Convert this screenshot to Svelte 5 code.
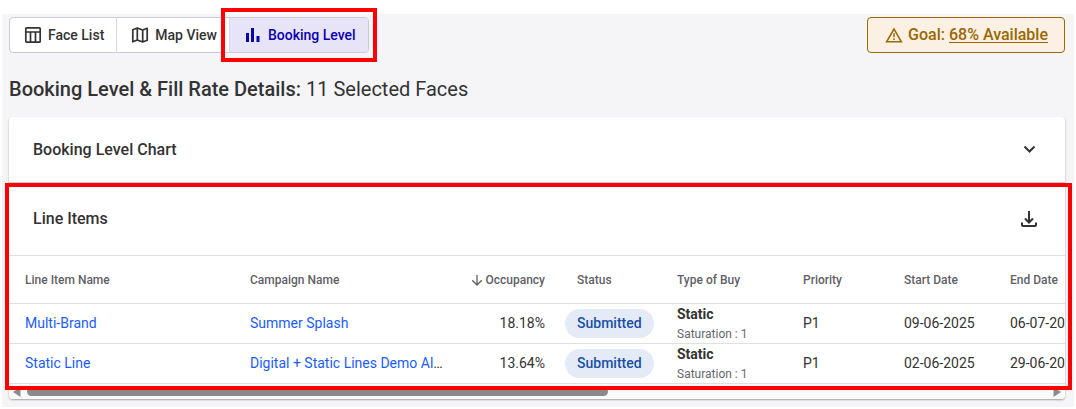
<script lang="ts">
	type LineItem = {
		name: string;
		campaign: string;
		occupancy: string;
		status: string;
		buyType: string;
		saturation: number;
		priority: string;
		start: string;
		end: string;
	};

	const views = [
		{ id: 'faces', label: 'Face List' },
		{ id: 'map', label: 'Map View' },
		{ id: 'booking', label: 'Booking Level' }
	];

	const lineItems: LineItem[] = [
		{ name: 'Multi-Brand', campaign: 'Summer Splash', occupancy: '18.18%', status: 'Submitted', buyType: 'Static', saturation: 1, priority: 'P1', start: '09-06-2025', end: '06-07-2025' },
		{ name: 'Static Line', campaign: 'Digital + Static Lines Demo All Markets', occupancy: '13.64%', status: 'Submitted', buyType: 'Static', saturation: 1, priority: 'P1', start: '02-06-2025', end: '29-06-2025' }
	];

	let activeView = $state('booking');
	let chartOpen = $state(false);
</script>

<main class="page">
	<div class="toolbar">
		<div class="views">
			{#each views as view}
				<button type="button" class="view" class:active={activeView === view.id} aria-pressed={activeView === view.id} onclick={() => (activeView = view.id)}>
					{#if view.id === 'faces'}
						<svg class="icon" viewBox="0 0 18 18" fill="none" stroke="currentColor" stroke-width="1.7">
							<rect x="1.8" y="1.8" width="14.4" height="14.4" rx="1" />
							<path d="M2 6h14M6.5 6v10M11.5 6v10" />
						</svg>
					{:else if view.id === 'map'}
						<svg class="icon" viewBox="0 0 18 18" fill="none" stroke="currentColor" stroke-width="1.7" stroke-linejoin="round">
							<path d="M1.8 3.7 6.3 2l5.4 2 4.5-1.7v12L11.7 16l-5.4-2-4.5 1.8zM6.3 2v12M11.7 4v12" />
						</svg>
					{:else}
						<svg class="icon" viewBox="0 0 18 18" fill="currentColor">
							<path d="M2 7h3v9H2zM7 2h3v14H7zM12.500 10h3v6h-3z" />
						</svg>
					{/if}
					<span>{view.label}</span>
				</button>
			{/each}
			<div class="callout callout-view"></div>
		</div>
		<div class="goal">
			<svg class="icon" viewBox="0 0 18 18" fill="none" stroke="currentColor">
				<path d="M9 4 1.600 16.800h14.800z" stroke-width="1.500" />
				<path d="M9 8.300v4M9 13.300v1.700" stroke-width="1.500" />
			</svg>
			<span>Goal: <a href="#availability">68% Available</a></span>
		</div>
	</div>

	<h1>Booking Level &amp; Fill Rate Details: <span>11 Selected Faces</span></h1>

	<div class="card">
		<section class="panel chart-panel">
			<h2>Booking Level Chart</h2>
			<button type="button" class="icon-button" aria-label="Toggle chart" aria-expanded={chartOpen} onclick={() => (chartOpen = !chartOpen)}>
				<svg viewBox="0 0 24 24" fill="none" stroke="currentColor" stroke-width="2">
					<path d="m7.500 8.500 5 5 5-5" />
				</svg>
			</button>
		</section>

		<section class="line-items">
			<div class="panel items-panel">
				<h2>Line Items</h2>
				<button type="button" class="icon-button" aria-label="Download line items">
					<svg viewBox="0 0 24 24" fill="none" stroke="currentColor" stroke-width="2">
						<path d="M12 4v11M8 11.500l4 4 4-4" />
						<path d="M5 15.500V18q0 1 1 1h12q1 0 1-1v-2.500" />
					</svg>
				</button>
			</div>

			<div class="table-scroll">
				<table>
					<colgroup>
						<col class="col-name" />
						<col class="col-name" />
						<col class="col-occupancy" />
						<col class="col-status" />
						<col class="col-type" />
						<col class="col-priority" />
						<col class="col-date" />
						<col class="col-date" />
					</colgroup>
					<thead>
						<tr>
							<th>Line Item Name</th>
							<th>Campaign Name</th>
							<th class="num" aria-sort="descending">
								<svg class="sort" viewBox="0 0 12 12" fill="none" stroke="currentColor" stroke-width="1.300">
									<path d="M6 1v10M1.200 6.200 6 11l4.800-4.800" />
								</svg>
								Occupancy
							</th>
							<th>Status</th>
							<th>Type of Buy</th>
							<th>Priority</th>
							<th>Start Date</th>
							<th>End Date</th>
						</tr>
					</thead>
					<tbody>
						{#each lineItems as item}
							<tr>
								<td><a href="#line-item">{item.name}</a></td>
								<td class="clip"><a href="#campaign">{item.campaign}</a></td>
								<td class="num">{item.occupancy}</td>
								<td class="status"><span class="pill">{item.status}</span></td>
								<td class="buy">
									<strong>{item.buyType}</strong>
									<small>Saturation : {item.saturation}</small>
								</td>
								<td>{item.priority}</td>
								<td>{item.start}</td>
								<td>{item.end}</td>
							</tr>
						{/each}
					</tbody>
				</table>
			</div>
			<div class="callout callout-items"></div>
		</section>

		<div class="scrollbar">
			<svg viewBox="0 0 8 10" fill="currentColor"><path d="M7.500 0v10L0 5z" /></svg>
			<div class="track"><div class="thumb"></div></div>
			<svg viewBox="0 0 8 10" fill="currentColor"><path d="M.5 0v10L8 5z" /></svg>
		</div>
	</div>
</main>

<style>
	:global(body) { margin: 0; background: #fff; }

	.page { margin: 14px 2px 0; padding: 3px 9px 8px 7px; background: #f5f5f8; color: #333; font-family: Roboto, "Liberation Sans", sans-serif; font-size: 14px; }
	button { font: inherit; color: inherit; cursor: pointer; }
	h1, h2 { margin: 0; font-weight: 500; }

	.toolbar { display: flex; justify-content: space-between; }
	.views { position: relative; display: flex; box-sizing: border-box; height: 36px; border: 1px solid #cbcad8; border-radius: 4px; background: #fff; }
	.view { display: flex; align-items: center; gap: 6px; padding: 0 12px 0 14px; border: 0; border-left: 1px solid #d8d8e0; background: none; font-weight: 500; }
	.view:first-child { border-left: 0; }
	.view.active { background: #e6e4f6; color: #0a00b0; border-radius: 0 3px 3px 0; }
	.icon { width: 18px; height: 18px; flex: none; }

	.goal { display: flex; align-items: center; gap: 5px; box-sizing: border-box; height: 36px; padding: 0 16px 2px 17px; border: 1px solid #9a6700; border-radius: 4px; background: #faf0e4; color: #9a6700; font-size: 16px; font-weight: 500; }
	.goal a { color: inherit; text-underline-offset: 2px; }

	h1 { margin: 24px 0 16px; font-size: 20px; line-height: 24px; }
	h1 span { font-weight: 400; }

	.card { border-radius: 4px; background: #fff; box-shadow: 0 1px 2px rgba(0, 0, 0, 0.35); }
	.panel { display: flex; align-items: center; justify-content: space-between; padding: 0 24px; }
	.chart-panel { height: 65px; border-bottom: 1px solid #ccc; }
	.items-panel { height: 72px; }
	h2 { font-size: 16px; line-height: 24px; }
	.icon-button { display: flex; padding: 0; border: 0; background: none; }
	.icon-button svg { width: 24px; height: 24px; }

	.line-items { position: relative; }
	.table-scroll { overflow-x: auto; scrollbar-width: none; }
	table { width: 1091px; min-width: 100%; table-layout: fixed; border-collapse: separate; border-spacing: 0; border-top: 1px solid #e0e0e0; }
	.col-name { width: 225px; }
	.col-occupancy { width: 102px; }
	.col-status { width: 100px; }
	.col-type { width: 126px; }
	.col-priority { width: 101px; }
	.col-date { width: 106px; }
	th, td { box-sizing: border-box; padding: 0 16px; border-bottom: 1px solid #e0e0e0; text-align: left; white-space: nowrap; }
	th { height: 48px; color: #5f5f66; font-size: 12px; font-weight: 500; }
	td { height: 40px; padding-bottom: 2px; }
	td a { color: #1a5cff; text-decoration: none; }
	.num { padding-left: 0; text-align: right; }
	.sort { width: 12px; height: 12px; vertical-align: middle; }
	.clip { overflow: hidden; text-overflow: ellipsis; }
	.status { padding: 0 4px; }
	.pill { display: inline-block; padding: 0 12px; border-radius: 15px; background: #e4ebf6; color: #1a4fa8; font-weight: 500; line-height: 29px; }
	.buy { padding-bottom: 0; }
	.buy strong, .buy small { display: block; }
	.buy strong { margin-bottom: 1px; font-weight: 700; line-height: 20px; }
	.buy small { color: #66666b; font-size: 12px; line-height: 18px; }

	.scrollbar { display: flex; align-items: center; gap: 6px; height: 15px; padding: 0 4px; border-radius: 0 0 4px 4px; background: #fafafa; color: #8b8b8b; }
	.scrollbar svg { width: 8px; height: 10px; }
	.track { flex: 1; }
	.thumb { width: 57%; height: 9px; border-radius: 5px; background: #8b8b8b; }

	/* red guide frames drawn over the content */
	.callout { position: absolute; border: 4px solid #f00; pointer-events: none; }
	.callout-view { top: -10px; right: -9px; bottom: -10px; width: 148px; }
	.callout-items { inset: 0 -7px -6px -4px; }
</style>
